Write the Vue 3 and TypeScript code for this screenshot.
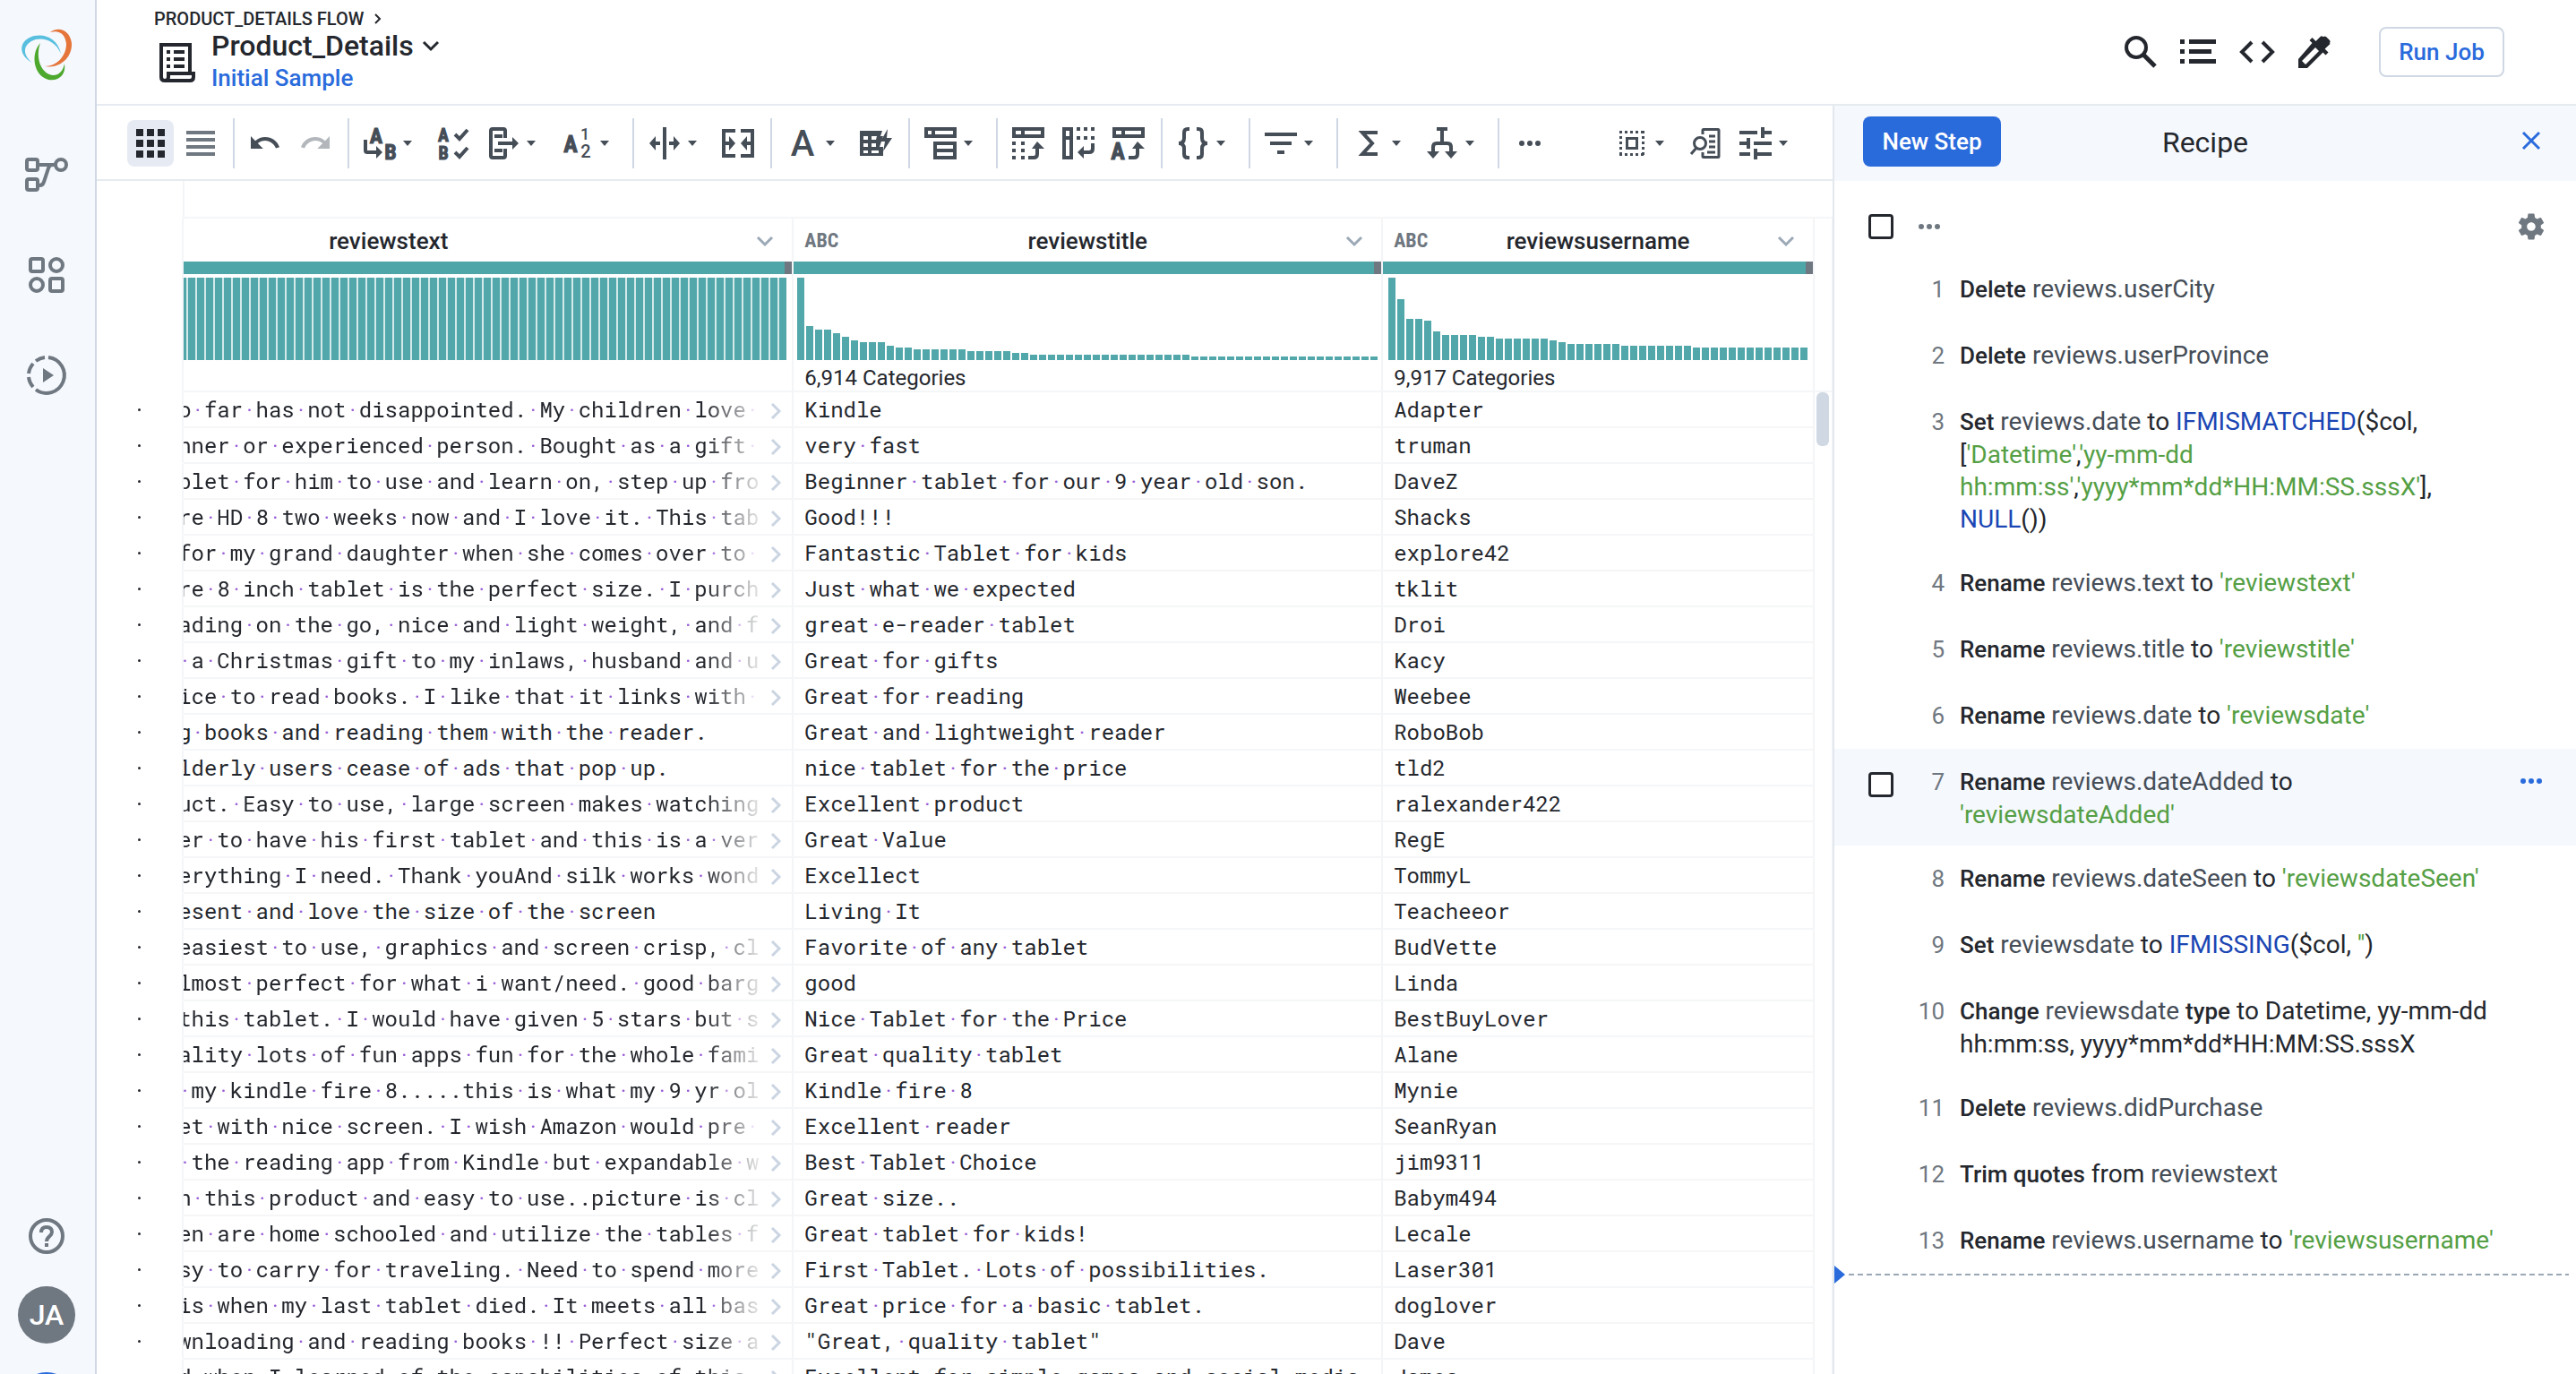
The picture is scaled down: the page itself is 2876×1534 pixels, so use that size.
<script setup lang="ts">
interface Row { text: string; title: string; user: string; more: boolean }
interface Tool { icon: string; label: string; menu?: boolean; off?: boolean }
interface Part { k: 'b' | 'c' | 't' | 'f' | 's'; v: string }

const H = '<path fill="none" stroke="currentColor" stroke-width="4" '
const NARROW = `font-family="'Liberation Sans Narrow','Roboto Condensed',Roboto,sans-serif" font-weight="700" fill="currentColor" stroke="currentColor" text-anchor="middle"`
const ROBOTO = 'font-family="Roboto,sans-serif" fill="currentColor" text-anchor="middle"'

// Every glyph is drawn in a 36 x 36 box
const icons: Record<string, string> = {
  undo: '<path fill="currentColor" d="M2 10l5 5.200c3-2.600 7-4.200 11-4.200 7.500 0 13.600 4.500 16 11.200l-4 1.400C28 18.500 23.500 15 18 15c-3 0-6 1.200-8.200 3l6 6H2z"/>',
  redo: '<path fill="currentColor" d="M34 10l-5 5.200c-3-2.600-7-4.200-11-4.200-7.500 0-13.600 4.500-16 11.200l4 1.400C8 18.500 12.500 15 18 15c3 0 6 1.200 8.200 3l-6 6H34z"/>',
  ab: `<text x="14" y="18" font-size="24" ${NARROW}>A</text><text x="30" y="36" font-size="24" ${NARROW}>B</text>${H}d="M2 14v12q0 2 2 2h12"/><path fill="currentColor" d="M14 21l7 7-7 7z"/>`,
  abCheck: `<text x="7" y="16" font-size="20" ${NARROW}>A</text><text x="7" y="36" font-size="20" ${NARROW}>B</text>${H}d="M20 8l5 5 9-10M20 28l5 5 9-10"/>`,
  exp: `${H}d="M20 12V4q0-2-2-2H6Q4 2 4 4v28q0 2 2 2h12q2 0 2-2v-8"/>${H}d="M8 10h9M8 26h9M12 18h18" /><path fill="currentColor" d="M28 11l7 7-7 7z"/>`,
  a12: `<text x="11" y="28" font-size="26" ${NARROW}>A</text><text x="27" y="14" font-size="18" font-weight="500" ${ROBOTO}>1</text><text x="28" y="34" font-size="20" font-weight="500" ${ROBOTO}>2</text>`,
  split: '<path fill="currentColor" d="M16 0h4v36h-4zM1 18l7-8v6h5v4H8v6zM35 18l-7-8v6h-5v4h5v6z"/>',
  merge: `${H}d="M15 4H2v28h13M21 4h13v28H21"/><path fill="currentColor" d="M4 16h4v-6l7 8-7 8v-6H4zM32 16h-4v-6l-7 8 7 8v-6h4z"/>`,
  fontA: `<text x="18" y="32" font-size="40" font-weight="500" ${ROBOTO}>A</text>`,
  bolt: `<path fill="currentColor" fill-rule="evenodd" d="M0 4h25l-2 6h3l-4 12h4v10H0zM4 10v4h5v-4zM13 10v4h5l1-4zM4 18v4h5v-4zM13 18v4h5v-4zM4 26v3h5v-3zM13 26v3h8v-3z"/><path fill="currentColor" d="M31 2l-8 14h5l-2 11 10-15h-6z"/>`,
  stack: `${H}d="M2 2h32v8H2zM12 18h22v8H12zM12 26h22v8H12z"/><path fill="currentColor" d="M8 2h4v8H8z"/>`,
  pivot1: `${H}d="M2 2h32v8H2z"/><path fill="currentColor" d="M10 2h4v8h-4zM0 16h4v4H0zM10 16h4v4h-4zM0 24h4v4H0zM10 24h4v4h-4zM0 32h4v4H0zM10 32h4v4h-4zM28 16l8 8H22z"/>${H}d="M18 34h6q4 0 4-4v-8"/>`,
  pivot2: `${H}d="M2 2h8v32H2z"/><path fill="currentColor" d="M2 10h8v4H2zM16 0h4v4h-4zM24 0h4v4h-4zM32 0h4v4h-4zM16 10h4v4h-4zM24 10h4v4h-4zM32 10h4v4h-4zM17 28l7-7v14z"/>${H}d="M34 18v6q0 4-4 4h-7"/>`,
  pivot3: `${H}d="M2 2h32v8H2z"/><path fill="currentColor" d="M10 2h4v8h-4zM28 16l8 8H22z"/>${H}d="M18 34h6q4 0 4-4v-8"/><text x="6" y="36" font-size="26" ${NARROW}>A</text>`,
  braces: `${H}d="M14 2h-2q-4 0-4 4v6q0 6-6 6 6 0 6 6v6q0 4 4 4h2M22 2h2q4 0 4 4v6q0 6 6 6-6 0-6 6v6q0 4-4 4h-2"/>`,
  filter: '<path fill="currentColor" d="M0 6h36v4H0zM6 16h24v4H6zM14 26h8v4h-8z"/>',
  sigma: `${H}d="M28 6H11l11 12-11 12h17"/>`,
  branch: `${H}d="M12 2h12M18 2v16M8 30v-8q0-4 4-4h12q4 0 4 4v8"/><path fill="currentColor" d="M1 27h14l-7 8zM21 27h14l-7 8z"/>`,
  dots: '<circle cx="9" cy="18" r="3" fill="currentColor"/><circle cx="18" cy="18" r="3" fill="currentColor"/><circle cx="27" cy="18" r="3" fill="currentColor"/>',
  select: '<path fill="none" stroke="currentColor" stroke-width="3" d="M12.500 12.500h11v11h-11z"/><path fill="none" stroke="currentColor" stroke-width="3" stroke-dasharray="3 3" d="M4 5.500h28M4 30.500h28M5.500 4v28M30.500 4v28"/>',
  find: '<g fill="none" stroke="currentColor" stroke-width="3"><path d="M15 8V3.500Q15 2.500 16 2.500h16q1 0 1 1v29q0 1-1 1H16q-1 0-1-1V28"/><circle cx="12" cy="18" r="6.500"/><path d="M8 23l-6 7M22 10h7M22 16h7M22 22h7M20 28h9"/></g>',
  sliders: '<path fill="currentColor" d="M0 4h20v4H0zM24 0h4v12h-4zM28 4h8v4h-8zM0 16h8v4H0zM8 12h4v12H8zM16 16h20v4H16zM0 28h12v4H0zM16 24h4v12h-4zM20 28h16v4H20z"/>',
}

const toolGroups: Tool[][] = [
  [{ icon: 'undo', label: 'Undo' }, { icon: 'redo', label: 'Redo', off: true }],
  [{ icon: 'ab', label: 'Replace', menu: true }, { icon: 'abCheck', label: 'Standardize' }, { icon: 'exp', label: 'Extract', menu: true }, { icon: 'a12', label: 'Count', menu: true }],
  [{ icon: 'split', label: 'Split', menu: true }, { icon: 'merge', label: 'Merge' }],
  [{ icon: 'fontA', label: 'Format', menu: true }, { icon: 'bolt', label: 'Conditions' }],
  [{ icon: 'stack', label: 'Group', menu: true }],
  [{ icon: 'pivot1', label: 'Pivot' }, { icon: 'pivot2', label: 'Unpivot' }, { icon: 'pivot3', label: 'Rows to header' }],
  [{ icon: 'braces', label: 'Nest', menu: true }],
  [{ icon: 'filter', label: 'Filter', menu: true }],
  [{ icon: 'sigma', label: 'Functions', menu: true }, { icon: 'branch', label: 'Join', menu: true }],
  [{ icon: 'dots', label: 'More tools' }],
]
const viewTools: Tool[] = [
  { icon: 'select', label: 'Selection', menu: true },
  { icon: 'find', label: 'Find column' },
  { icon: 'sliders', label: 'View options', menu: true },
]

const runs = (spec: [number, number][]) => spec.flatMap(([h, n]) => Array<number>(n).fill(h))
const columns = [
  { name: 'reviewstext', scrolled: true, categories: '', bars: runs([[92, 89]]) },
  { name: 'reviewstitle', scrolled: false, categories: '6,914 Categories', bars: runs([[92, 1], [38, 1], [34, 2], [30, 1], [26, 1], [22, 1], [20, 3], [16, 1], [14, 2], [12, 6], [10, 5], [8, 2], [6, 18], [4, 21]]) },
  { name: 'reviewsusername', scrolled: false, categories: '9,917 Categories', bars: runs([[92, 1], [68, 1], [46, 2], [44, 1], [32, 1], [28, 4], [26, 2], [24, 6], [22, 1], [20, 1], [18, 6], [16, 8], [14, 13]]) },
]

const source: [string, string, string][] = [
  ['o far has not disappointed. My children love ', 'Kindle', 'Adapter'],
  ['nner or experienced person. Bought as a gift ', 'very fast', 'truman'],
  ['blet for him to use and learn on, step up fro', 'Beginner tablet for our 9 year old son.', 'DaveZ'],
  ['re HD 8 two weeks now and I love it. This tab', 'Good!!!', 'Shacks'],
  ['for my grand daughter when she comes over to ', 'Fantastic Tablet for kids', 'explore42'],
  ['re 8 inch tablet is the perfect size. I purch', 'Just what we expected', 'tklit'],
  ['ading on the go, nice and light weight, and f', 'great e-reader tablet', 'Droi'],
  [' a Christmas gift to my inlaws, husband and u', 'Great for gifts', 'Kacy'],
  ['ice to read books. I like that it links with ', 'Great for reading', 'Weebee'],
  ['g books and reading them with the reader.', 'Great and lightweight reader', 'RoboBob'],
  ['lderly users cease of ads that pop up.', 'nice tablet for the price', 'tld2'],
  ['uct. Easy to use, large screen makes watching', 'Excellent product', 'ralexander422'],
  ['er to have his first tablet and this is a ver', 'Great Value', 'RegE'],
  ['erything I need. Thank youAnd silk works wond', 'Excellect', 'TommyL'],
  ['esent and love the size of the screen', 'Living It', 'Teacheeor'],
  ['easiest to use, graphics and screen crisp, cl', 'Favorite of any tablet', 'BudVette'],
  ['lmost perfect for what i want/need. good barg', 'good', 'Linda'],
  ['this tablet. I would have given 5 stars but s', 'Nice Tablet for the Price', 'BestBuyLover'],
  ['ality lots of fun apps fun for the whole fami', 'Great quality tablet', 'Alane'],
  [' my kindle fire 8.....this is what my 9 yr ol', 'Kindle fire 8', 'Mynie'],
  ['et with nice screen. I wish Amazon would pre ', 'Excellent reader', 'SeanRyan'],
  [' the reading app from Kindle but expandable w', 'Best Tablet Choice', 'jim9311'],
  ['n this product and easy to use..picture is cl', 'Great size..', 'Babym494'],
  ['en are home schooled and utilize the tables f', 'Great tablet for kids!', 'Lecale'],
  ['sy to carry for traveling. Need to spend more', 'First Tablet. Lots of possibilities.', 'Laser301'],
  ['is when my last tablet died. It meets all bas', 'Great price for a basic tablet.', 'doglover'],
  ['wnloading and reading books !! Perfect size a', '"Great, quality tablet"', 'Dave'],
  ['d when I learned of the capabilities of this ', 'Excellent for simple games and social media', 'James'],
]
const rows: Row[] = source.map(([text, title, user]) => ({ text, title, user, more: text.length === 45 }))

const p = (k: Part['k'], v: string): Part => ({ k, v })
const rename = (from: string, to: string) => [p('b', 'Rename'), p('c', ` ${from}`), p('t', ' to '), p('s', `'${to}'`)]
const steps: Part[][] = [
  [p('b', 'Delete'), p('c', ' reviews.userCity')],
  [p('b', 'Delete'), p('c', ' reviews.userProvince')],
  [p('b', 'Set'), p('c', ' reviews.date'), p('t', ' to '), p('f', 'IFMISMATCHED'), p('t', '($col, ['), p('s', "'Datetime'"), p('t', ','), p('s', "'yy-mm-dd hh:mm:ss'"), p('t', ','), p('s', "'yyyy*mm*dd*HH:MM:SS.sssX'"), p('t', '], '), p('f', 'NULL'), p('t', '())')],
  rename('reviews.text', 'reviewstext'),
  rename('reviews.title', 'reviewstitle'),
  rename('reviews.date', 'reviewsdate'),
  rename('reviews.dateAdded', 'reviewsdateAdded'),
  rename('reviews.dateSeen', 'reviewsdateSeen'),
  [p('b', 'Set'), p('c', ' reviewsdate'), p('t', ' to '), p('f', 'IFMISSING'), p('t', '($col, '), p('s', "''"), p('t', ')')],
  [p('b', 'Change'), p('c', ' reviewsdate '), p('b', 'type'), p('t', ' to Datetime, yy-mm-dd hh:mm:ss, yyyy*mm*dd*HH:MM:SS.sssX')],
  [p('b', 'Delete'), p('c', ' reviews.didPurchase')],
  [p('b', 'Trim quotes'), p('t', ' from '), p('c', 'reviewstext')],
  rename('reviews.username', 'reviewsusername'),
]
const activeStep = 6
</script>

<template>
  <div class="app">
    <nav class="rail" aria-label="Main">
      <a href="#" class="logo" aria-label="Home">
        <svg width="56" height="58" viewBox="0 0 56 58">
          <path fill="#58bfdf" d="M12 38C-2 31-4 16 9 10 22 4 40 9 44 28 38 13 22 8 11 14 1 20 2 30 12 38z" />
          <path fill="#e5753a" d="M32 4C42-3 54 2 56 16 57 32 43 45 26 42 40 42 50 30 50 17 49 6 42 1 32 4z" />
          <path fill="#4da82e" d="M21 16C10 28 13 52 30 57 42 59 50 51 48 39 46 50 38 54 31 51 20 46 16 30 21 16z" />
        </svg>
      </a>
      <a href="#" class="rail-link" aria-label="Flows">
        <svg width="50" height="40" viewBox="0 0 50 40" fill="none" stroke="currentColor" stroke-width="4">
          <rect x="3" y="3" width="12" height="12" rx="2" /><rect x="3" y="25" width="12" height="12" rx="2" /><circle cx="41" cy="9" r="6" /><path d="M15 9h20M15 32h2q4 0 5-4l5-15q1-4 5-4" />
        </svg>
      </a>
      <a href="#" class="rail-link" aria-label="Library">
        <svg width="40" height="40" viewBox="0 0 40 40" fill="none" stroke="currentColor" stroke-width="4">
          <rect x="2" y="2" width="14" height="14" rx="2" /><circle cx="31" cy="9" r="7" /><circle cx="9" cy="31" r="7" /><rect x="24" y="24" width="14" height="14" rx="2" />
        </svg>
      </a>
      <a href="#" class="rail-link" aria-label="Jobs">
        <svg width="44" height="44" viewBox="0 0 44 44" fill="none" stroke="currentColor" stroke-width="4">
          <path d="M24 2a20 20 0 1 1-14 36M20 2a20 20 0 0 0-10 4M7 9a20 20 0 0 0-5 11M2 24a20 20 0 0 0 5 11" /><path fill="currentColor" stroke="none" d="M18 14l12 8-12 8z" />
        </svg>
      </a>
      <a href="#" class="rail-link rail-help" aria-label="Help">
        <svg width="40" height="40" viewBox="0 0 40 40">
          <circle cx="20" cy="20" r="18" fill="none" stroke="currentColor" stroke-width="4" />
          <path d="M14 16q0-6 6-6t6 5.500c0 4.500-6 5-6 10.500" fill="none" stroke="currentColor" stroke-width="4" /><path fill="currentColor" d="M18 28h4v4h-4z" />
        </svg>
      </a>
      <button type="button" class="avatar">JA</button>
      <button type="button" class="chat" aria-label="Chat"></button>
    </nav>

    <div class="page">
      <header class="top">
        <div class="titles">
          <a href="#" class="crumb">PRODUCT_DETAILS FLOW
            <svg width="8" height="12" viewBox="0 0 8 12" fill="none" stroke="currentColor" stroke-width="2"><path d="M1 1l5 5-5 5" /></svg>
          </a>
          <div class="title-row">
            <svg class="doc" width="40" height="44" viewBox="0 0 40 44" fill="none" stroke="currentColor" stroke-width="4">
              <path d="M34 32V2H2v36q0 4 4 4h28q4 0 4-4v-4H10v4q0 4-4 4" />
              <path d="M8 10h4M16 10h12M8 18h4M16 18h12M8 26h4M16 26h12" />
            </svg>
            <div>
              <h1>Product_Details
                <svg width="18" height="12" viewBox="0 0 18 12" fill="none" stroke="currentColor" stroke-width="3"><path d="M1 2l8 8 8-8" /></svg>
              </h1>
              <a href="#" class="sample">Initial Sample</a>
            </div>
          </div>
        </div>
        <div class="actions">
          <button type="button" class="bare" aria-label="Search">
            <svg width="36" height="36" viewBox="0 0 36 36" fill="none" stroke="currentColor" stroke-width="4"><circle cx="13" cy="13" r="11" /><path stroke-width="5" d="M21 21l13 13" /></svg>
          </button>
          <button type="button" class="bare" aria-label="Steps">
            <svg width="40" height="36" viewBox="0 0 40 36" fill="currentColor"><path d="M0 4h5v5H0zM10 4h30v5H10zM0 15h5v5H0zM10 15h25v5H10zM0 26h5v5H0zM10 26h30v5H10z" /></svg>
          </button>
          <button type="button" class="bare" aria-label="Code">
            <svg width="40" height="36" viewBox="0 0 40 36" fill="none" stroke="currentColor" stroke-width="4"><path d="M14 7L3 18l11 11M26 7l11 11-11 11" /></svg>
          </button>
          <button type="button" class="bare" aria-label="Pick">
            <svg width="36" height="36" viewBox="0 0 36 36"><path fill="currentColor" fill-rule="evenodd" d="M35 8.500L27.500 1q-1.500-1.300-3 0l-5 5-4-4-3 3 3 3L0 26v10h10l17.500-17.500 3 3 3-3-4-4 5.500-5q1.300-1.500 0-1zM8 32l-4-4 15-15 4 4z" /><path fill="currentColor" d="M21 7l7-6q1.500-1 3 0l4 4q1.300 1.500 0 3l-6 7z" /></svg>
          </button>
          <button type="button" class="run">Run Job</button>
        </div>
      </header>

      <div class="body">
        <main class="main">
          <div class="toolbar" role="toolbar" aria-label="Transforms">
            <div class="views">
              <button type="button" class="view on" aria-label="Grid view">
                <svg width="32" height="32" viewBox="0 0 32 32" fill="currentColor"><path d="M0 0h8v8H0zM12 0h8v8h-8zM24 0h8v8h-8zM0 12h8v8H0zM12 12h8v8h-8zM24 12h8v8h-8zM0 24h8v8H0zM12 24h8v8h-8zM24 24h8v8h-8z" /></svg>
              </button>
              <button type="button" class="view" aria-label="Column view">
                <svg width="32" height="28" viewBox="0 0 32 28" fill="currentColor"><path d="M0 0h32v4H0zM0 8h32v4H0zM0 16h32v4H0zM0 24h32v4H0z" /></svg>
              </button>
            </div>
            <div v-for="(g, i) in toolGroups" :key="i" class="group">
              <button v-for="t in g" :key="t.icon" type="button" class="tool" :class="{ menu: t.menu, off: t.off }" :aria-label="t.label">
                <svg width="36" height="36" viewBox="0 0 36 36" v-html="icons[t.icon]"></svg>
                <svg v-if="t.menu" width="12" height="8" viewBox="0 0 12 8"><path fill="currentColor" d="M1 1h10L6 7z" /></svg>
              </button>
            </div>
            <div class="right-tools">
              <button v-for="t in viewTools" :key="t.icon" type="button" class="tool" :class="{ menu: t.menu }" :aria-label="t.label">
                <svg width="36" height="36" viewBox="0 0 36 36" v-html="icons[t.icon]"></svg>
                <svg v-if="t.menu" width="12" height="8" viewBox="0 0 12 8"><path fill="currentColor" d="M1 1h10L6 7z" /></svg>
              </button>
            </div>
          </div>

          <div class="ruler"><div class="ruler-gutter"></div><div class="ruler-rest"></div></div>
          <div class="sheet">
            <table>
              <colgroup><col class="w-gutter"><col><col class="w-title"><col class="w-user"></colgroup>
              <thead>
                <tr>
                  <td class="gutter"></td>
                  <th v-for="c in columns" :key="c.name" scope="col">
                    <div class="col-head" :class="{ scrolled: c.scrolled }">
                      <div class="col-name">
                        <span class="type">{{ c.scrolled ? '' : 'ABC' }}</span>
                        <span class="name">{{ c.name }}</span>
                        <button type="button" class="col-menu" aria-label="Column menu">
                          <svg width="18" height="12" viewBox="0 0 18 12" fill="none" stroke="currentColor" stroke-width="3"><path d="M1 2l8 8 8-8" /></svg>
                        </button>
                      </div>
                      <div class="quality"></div>
                      <div class="bars" :class="{ full: c.scrolled }">
                        <i v-for="(h, i) in c.bars" :key="i" :style="{ height: h + 'px' }"></i>
                      </div>
                      <div class="cats">{{ c.categories }}</div>
                    </div>
                  </th>
                </tr>
              </thead>
              <tbody>
                <tr v-for="(r, i) in rows" :key="i">
                  <td class="gutter"><span class="mark"></span></td>
                  <td>
                    <div class="cell">
                      <span class="long" :class="{ fade: r.more }"><template v-for="(w, j) in r.text.split(' ')" :key="j"><span v-if="j" class="sp">·</span>{{ w }}</template></span>
                      <svg v-if="r.more" class="more" width="12" height="18" viewBox="0 0 12 18" fill="none" stroke="currentColor" stroke-width="3"><path d="M2 1l8 8-8 8" /></svg>
                    </div>
                  </td>
                  <td><div class="cell pad"><template v-for="(w, j) in r.title.split(' ')" :key="j"><span v-if="j" class="sp">·</span>{{ w }}</template></div></td>
                  <td><div class="cell pad">{{ r.user }}</div></td>
                </tr>
              </tbody>
            </table>
            <div class="track"><div class="track-head"></div><div class="thumb"></div></div>
          </div>
        </main>

        <aside class="recipe">
          <div class="recipe-head">
            <button type="button" class="new">New Step</button>
            <h2>Recipe</h2>
            <button type="button" class="bare close" aria-label="Close">
              <svg width="22" height="22" viewBox="0 0 22 22" fill="none" stroke="currentColor" stroke-width="3"><path d="M2 2l18 18M20 2L2 20" /></svg>
            </button>
          </div>
          <div class="recipe-bar">
            <input type="checkbox" aria-label="Select all steps">
            <button type="button" class="bare grey" aria-label="Bulk actions">
              <svg width="24" height="8" viewBox="0 0 24 8" fill="currentColor"><circle cx="3" cy="4" r="3" /><circle cx="12" cy="4" r="3" /><circle cx="21" cy="4" r="3" /></svg>
            </button>
            <button type="button" class="bare grey gear" aria-label="Settings">
              <svg width="36" height="36" viewBox="0 0 24 24" fill="currentColor"><path d="M19.140 12.940c.04-.3.060-.610.060-.940 0-.320-.020-.640-.070-.940l2.030-1.580c.18-.140.230-.410.120-.610l-1.920-3.320c-.120-.220-.370-.290-.590-.220l-2.390.960c-.5-.380-1.030-.7-1.620-.940l-.360-2.540c-.040-.240-.240-.410-.480-.410h-3.840c-.240 0-.430.170-.470.410l-.360 2.540c-.590.240-1.130.570-1.620.940l-2.390-.960c-.220-.080-.470 0-.590.220L2.740 8.870c-.120.210-.080.470.120.610l2.030 1.580c-.050.300-.090.630-.090.940s.02.640.07.940l-2.030 1.580c-.180.140-.230.410-.120.610l1.920 3.320c.120.220.370.290.590.220l2.390-.960c.5.380 1.030.7 1.620.940l.360 2.540c.050.240.240.410.480.410h3.840c.240 0 .440-.170.470-.410l.360-2.540c.590-.240 1.130-.560 1.620-.940l2.390.960c.220.080.470 0 .590-.220l1.920-3.320c.120-.220.070-.470-.120-.610l-2.010-1.580zM12 15.200c-1.760 0-3.200-1.440-3.200-3.200s1.440-3.200 3.200-3.200 3.200 1.440 3.200 3.200-1.440 3.200-3.200 3.200z" /></svg>
            </button>
          </div>
          <ol class="steps">
            <li v-for="(s, i) in steps" :key="i" :class="{ active: i === activeStep }">
              <span class="tick"><input v-if="i === activeStep" type="checkbox" :aria-label="'Select step ' + (i + 1)"></span>
              <span class="num">{{ i + 1 }}</span>
              <span class="desc"><template v-for="(q, j) in s" :key="j"><strong v-if="q.k === 'b'">{{ q.v }}</strong><span v-else :class="q.k">{{ q.v }}</span></template></span>
              <button v-if="i === activeStep" type="button" class="bare step-more" aria-label="Step actions">
                <svg width="24" height="8" viewBox="0 0 24 8" fill="currentColor"><circle cx="3" cy="4" r="3" /><circle cx="12" cy="4" r="3" /><circle cx="21" cy="4" r="3" /></svg>
              </button>
            </li>
          </ol>
          <div class="insert">
            <svg width="12" height="20" viewBox="0 0 12 20"><path fill="#2a6bdc" d="M0 0l12 10L0 20z" /></svg>
            <div class="dash"></div>
          </div>
        </aside>
      </div>
    </div>
  </div>
</template>

<style>
body { margin: 0; background: #fff; }
</style>

<style scoped>
* { box-sizing: border-box; }
.app { display: flex; height: 100vh; overflow: hidden; background: #fff; color: #24272d; font: 26px/36px Roboto, sans-serif; }
button { margin: 0; padding: 0; border: 0; background: none; color: inherit; font: inherit; cursor: pointer; }
svg { display: block; flex: none; overflow: visible; }
a { color: inherit; text-decoration: none; }
h1, h2, ol { margin: 0; padding: 0; }

.rail { flex: none; width: 108px; padding: 32px 2px 0 0; border-right: 2px solid #cfd8e4; background: #f5f8fd; display: flex; flex-direction: column; align-items: center; color: #6f7780; }
.logo { height: 58px; margin-bottom: 84px; }
.rail-link { display: flex; align-items: center; justify-content: center; height: 42px; margin-bottom: 70px; }
.rail-help { margin-top: auto; margin-bottom: 36px; height: 40px; }
.avatar { flex: none; width: 64px; height: 64px; margin-bottom: 32px; border-radius: 50%; background: #6f7780; color: #fff; font-size: 32px; font-weight: 500; }
.chat { flex: none; width: 64px; height: 64px; margin-bottom: -62px; border-radius: 50%; background: #2a6bdc; }

.page { flex: 1; min-width: 0; display: flex; flex-direction: column; }
.top { flex: none; height: 118px; padding: 10px 80px 0 64px; border-bottom: 2px solid #e6ebf1; display: flex; justify-content: space-between; }
.crumb { display: flex; align-items: center; gap: 12px; font-size: 20px; line-height: 22px; font-weight: 500; }
.title-row { display: flex; gap: 18px; padding-left: 6px; }
.doc { margin-top: 16px; }
h1 { display: flex; align-items: center; gap: 10px; font-size: 32px; line-height: 38px; font-weight: 500; }
.sample { display: block; line-height: 34px; font-weight: 500; color: #2a6bdc; }
.actions { display: flex; align-items: center; gap: 26px; height: 96px; }
.bare { display: flex; }
.run { width: 140px; height: 56px; margin-left: 28px; border: 2px solid #cfd8e4; border-radius: 8px; color: #2a6bdc; font-weight: 500; }

.body { flex: 1; min-height: 0; display: grid; grid-template-columns: minmax(0, 1fr) 830px; }
.main { min-width: 0; overflow: hidden; }
.toolbar { display: flex; align-items: flex-start; height: 84px; padding: 14px 32px 0 34px; border-bottom: 2px solid #e6ebf1; color: #454d57; }
.views { display: flex; gap: 4px; padding: 2px 10px 0 0; }
.view { display: flex; align-items: center; justify-content: center; width: 52px; height: 52px; border-radius: 8px; color: #6f7780; }
.view.on { background: #e6ebf3; color: #24272d; }
.group { display: flex; height: 56px; padding: 0 8px 0 6px; border-left: 2px solid #cfd8e4; }
.right-tools { display: flex; height: 56px; margin-left: auto; }
.tool { display: flex; align-items: center; gap: 7px; width: 56px; padding-left: 10px; }
.tool.menu { width: 82px; }
.off { color: #b3b7bb; }

.ruler { display: flex; height: 42px; }
.ruler-gutter { width: 98px; border-right: 2px solid #f3f5f7; }
.ruler-rest { flex: 1; border-bottom: 2px solid #f5f6f8; }
.sheet { display: flex; align-items: stretch; }
table { flex: 1; min-width: 0; table-layout: fixed; border-collapse: separate; border-spacing: 0; }
.w-gutter { width: 98px; }
.w-title { width: 658px; }
.w-user { width: 482px; }
th, td { padding: 0; border-right: 2px solid #f3f5f7; border-bottom: 2px solid #f5f6f8; overflow: hidden; font-weight: 400; text-align: left; }
td.gutter { border-bottom-color: transparent; }
.mark { display: block; width: 3px; height: 3px; margin-left: 46px; border-radius: 50%; background: #24272d; }
.col-head.scrolled { margin-left: -222px; }
.col-name { display: flex; align-items: center; justify-content: space-between; height: 48px; padding: 2px 21px 0 12px; }
.type { width: 60px; color: #6f7780; font: 700 22px/24px 'Liberation Sans Narrow', 'Roboto Condensed', Roboto, sans-serif; }
.name { font-weight: 500; }
.col-menu { width: 51px; display: flex; justify-content: flex-end; color: #9ba8b6; }
.quality { height: 14px; border-right: 8px solid #6f7780; background: #4fa6a9; }
.bars { display: flex; justify-content: center; align-items: flex-end; gap: 2px; height: 92px; margin-top: 4px; }
.bars i { flex: none; width: 8px; background: #52a7ab; }
.bars.full { background: #d3e9ea; margin-right: 6px; padding-left: 6px; }
.cats { height: 34px; padding-left: 12px; font-size: 24px; line-height: 40px; }
.cell { display: flex; align-items: center; height: 38px; font: 24px/38px 'Roboto Mono', 'Liberation Mono', monospace; white-space: pre; }
.pad { padding-left: 12px; }
.long { flex: 1; min-width: 0; height: 38px; overflow: hidden; text-indent: -6px; }
.fade { mask-image: linear-gradient(to right, #000 calc(100% - 60px), rgba(0, 0, 0, .12)); }
.sp { color: #9a5fd8; }
.more { margin: 4px 12px 0 13px; color: #cbd5e2; }
.track { flex: none; width: 20px; border-right: 1px solid #f3f5f7; }
.track-head { height: 194px; border-bottom: 2px solid #f5f6f8; }
.thumb { width: 14px; height: 60px; margin-left: 2px; border-radius: 6px; background: #d0d8e4; }

.recipe { border-left: 2px solid #e3e8ef; }
.recipe-head { display: grid; grid-template-columns: 1fr auto 1fr; align-items: center; height: 84px; padding: 0 32px 4px; background: #f5f8fd; }
.new { width: 154px; height: 56px; border-radius: 8px; background: #2a6bdc; color: #fff; font-weight: 500; }
h2 { font-size: 32px; line-height: 36px; font-weight: 400; padding-top: 2px; }
.close { justify-self: end; margin-right: 7px; padding-bottom: 2px; color: #2a6bdc; }
.recipe-bar { display: flex; align-items: center; height: 84px; padding: 18px 32px 0 38px; }
.grey { margin-left: 28px; color: #6f7780; }
.gear { margin-left: auto; }
input { appearance: none; display: block; width: 28px; height: 28px; margin: 0; border: 3px solid #24272d; border-radius: 4px; background: #fff; }
.steps { list-style: none; }
.steps li { display: grid; grid-template-columns: 28px 57px 1fr 24px; align-items: baseline; min-height: 74px; padding: 18px 38px 16px; }
.steps li.active { background: #f5f8fd; }
.tick { align-self: start; padding-top: 8px; }
.num { text-align: right; color: #6f7780; }
.desc { padding: 0 24px 0 17px; font-size: 28px; }
.desc strong { font-size: 26px; line-height: 38px; font-weight: 500; }
.c { color: #454d57; }
.f { color: #1b46b4; }
.s { color: #559f45; }
.step-more { align-self: start; padding-top: 14px; color: #2a6bdc; }
.insert { display: flex; align-items: center; height: 20px; margin: -9px 8px 0 0; }
.dash { flex: 1; height: 2px; margin-left: 4px; background: repeating-linear-gradient(to right, #9ba8b6 0 6px, transparent 6px 10px); }
</style>
